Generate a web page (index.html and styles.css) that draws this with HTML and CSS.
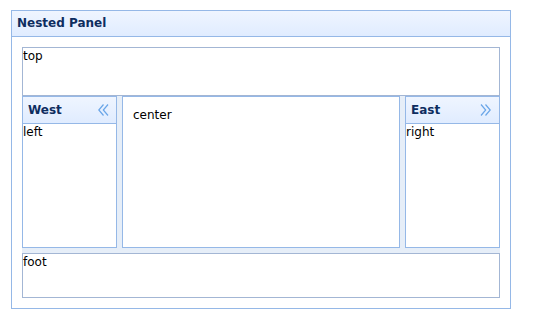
FILE: index.html
```html
<!DOCTYPE html>
<html lang="en">
<head>
    <meta charset="UTF-8">
    <meta name="viewport" content="width=device-width, initial-scale=1.0">
    <title>Nested Panel</title>
    <link rel="stylesheet" href="styles.css">
</head>
<body>

<div class="panel">
    <div class="panel-header">
        <div class="panel-title">Nested Panel</div>
    </div>
    <div class="panel-body">
        <div class="layout">
            <div class="region north">top</div>

            <div class="middle">
                <div class="side west">
                    <div class="side-header">
                        <span class="side-title">West</span>
                        <svg class="tool" width="16" height="16" viewBox="0 0 16 16">
                            <path d="M8.5 2.5 L3.8 8 L8.5 13.5 M13 2.5 L8.3 8 L13 13.5"/>
                        </svg>
                    </div>
                    <div class="side-body">left</div>
                </div>

                <div class="region center">center</div>

                <div class="side east">
                    <div class="side-header">
                        <span class="side-title">East</span>
                        <svg class="tool" width="16" height="16" viewBox="0 0 16 16">
                            <path d="M3 2.5 L7.7 8 L3 13.5 M7.5 2.5 L12.2 8 L7.5 13.5"/>
                        </svg>
                    </div>
                    <div class="side-body">right</div>
                </div>
            </div>

            <div class="region south">foot</div>
        </div>
    </div>
</div>

</body>
</html>
```

FILE: styles.css
```css
body {
    margin: 0;
    padding: 10px 0 0 11px;
    font-family: "DejaVu Sans", Verdana, sans-serif;
    font-size: 12px;
    line-height: 16px;
    color: #000;
    background-color: #fff;
}

.panel {
    width: 500px;
}

.panel-header {
    border: 1px solid #95b8e7;
    background: linear-gradient(to bottom, #eff5ff 0, #e0ecff 100%);
    padding: 5px;
    height: 15px;
}

.panel-title {
    font-weight: bold;
    color: #0e2d5f;
    line-height: 15px;
}

.panel-body {
    border: 1px solid #95b8e7;
    border-top: none;
    padding: 10px;
}

.layout {
    display: flex;
    flex-direction: column;
    height: 251px;
    background-color: #e6eef8;
}

.region {
    background-color: #fff;
    border: 1px solid #95b8e7;
    box-sizing: border-box;
}

.north,
.south {
    border-color: #a3b6d4;
}

.north {
    height: 49px;
}

.middle {
    display: flex;
    gap: 5px;
    height: 152px;
}

.south {
    height: 45px;
    margin-top: 5px;
}

.center {
    flex: 1;
    padding: 10px;
}

.side {
    width: 95px;
    display: flex;
    flex-direction: column;
}

.side-header {
    display: flex;
    align-items: center;
    justify-content: space-between;
    border: 1px solid #95b8e7;
    background: linear-gradient(to bottom, #eff5ff 0, #e0ecff 100%);
    padding: 5px;
    height: 16px;
}

.side-title {
    font-weight: bold;
    color: #0e2d5f;
    line-height: 16px;
}

.tool {
    fill: none;
    stroke: #6aa6e8;
    stroke-width: 1.2;
}

.side-body {
    flex: 1;
    background-color: #fff;
    border: 1px solid #95b8e7;
    border-top: none;
}
```
